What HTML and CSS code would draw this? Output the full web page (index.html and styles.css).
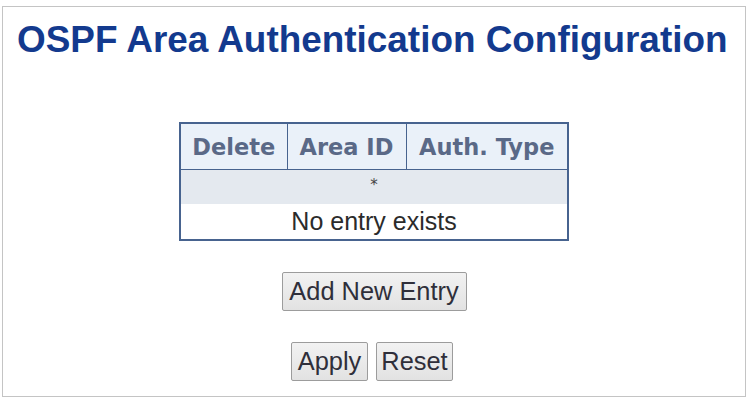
FILE: index.html
```html
<!DOCTYPE html>
<html>
<head>
<meta charset="utf-8">
<link rel="stylesheet" href="styles.css">
</head>
<body>
<div class="frame">
  <h1 class="title">OSPF Area Authentication Configuration</h1>
  <table class="grid">
    <thead>
      <tr>
        <th class="c-del">Delete</th>
        <th class="c-area">Area ID</th>
        <th class="c-auth">Auth. Type</th>
      </tr>
    </thead>
    <tbody>
      <tr class="row-star"><td colspan="3">*</td></tr>
      <tr class="row-empty"><td colspan="3">No entry exists</td></tr>
    </tbody>
  </table>
  <div class="actions">
    <button class="btn btn-add">Add New Entry</button>
  </div>
  <div class="actions actions-bottom">
    <button class="btn btn-small">Apply</button>
    <button class="btn btn-small">Reset</button>
  </div>
</div>
</body>
</html>
```

FILE: styles.css
```css
html, body {
  margin: 0;
  padding: 0;
  background: #ffffff;
}
body {
  width: 748px;
  height: 400px;
  overflow: hidden;
}
.frame {
  box-sizing: border-box;
  margin: 6px 2px 0 2px;
  height: 391px;
  border: 1px solid #c4c4c4;
  padding-top: 15px;
}
.title {
  margin: 0;
  padding-left: 14px;
  font-family: "Liberation Sans", Arial, sans-serif;
  font-weight: bold;
  font-size: 36.9px;
  line-height: 1;
  color: #133a8e;
  white-space: nowrap;
}
.grid {
  margin: 63px auto 0 auto;
  border-collapse: collapse;
  border: 2px solid #47638f;
}
.grid th {
  font-family: "DejaVu Sans", Verdana, sans-serif;
  font-weight: bold;
  font-size: 22.5px;
  color: #5a6987;
  background: #eaf1f9;
  border: 1px solid #47638f;
  height: 47px;
  padding: 0;
  box-sizing: border-box;
}
.c-del { width: 107px; }
.c-area { width: 119px; }
.c-auth { width: 162px; }
.row-star td {
  background: #e4e9ef;
  height: 34px;
  padding: 0;
  text-align: center;
  vertical-align: top;
  font-family: "DejaVu Sans", sans-serif;
  font-size: 15px;
  line-height: 30px;
  color: #444;
}
.row-empty td {
  background: #ffffff;
  height: 35px;
  padding: 0;
  text-align: center;
  font-family: "Liberation Sans", Arial, sans-serif;
  font-size: 25px;
  color: #2b2b2b;
}
.actions {
  display: flex;
  justify-content: center;
  gap: 8px;
  margin-top: 31px;
}
.actions-bottom {
  margin-top: 31px;
  padding-right: 4px;
}
.btn {
  box-sizing: border-box;
  height: 39px;
  padding: 0;
  border: 1px solid #9c9c9c;
  border-radius: 2px;
  background: linear-gradient(#f2f2f2, #e2e2e2);
  font-family: "Liberation Sans", Arial, sans-serif;
  font-size: 25.4px;
  color: #2f2f3a;
}
.btn-add { width: 185px; }
.btn-small { width: 77px; }
```
